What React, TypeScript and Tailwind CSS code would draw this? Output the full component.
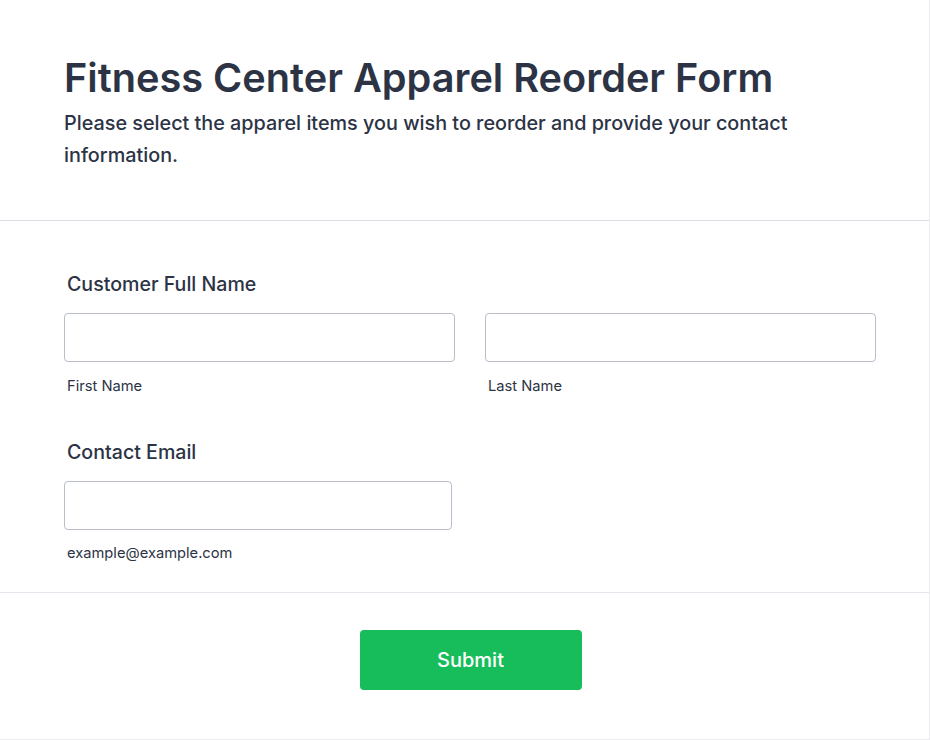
export default function App() {
  return (
    <div className="w-[930px] h-[740px] bg-white border-r border-b border-[#ececf0] font-['Inter',sans-serif] text-[#2c3345]">
      <header className="px-16 pt-[54px] pb-[49px] border-b border-[#dcdde4]">
        <h1 className="text-[39.7px] leading-[48px] font-semibold">
          Fitness Center Apparel Reorder Form
        </h1>
        <p className="mt-[5px] text-[19.8px] leading-8 font-medium max-w-[760px]">
          Please select the apparel items you wish to reorder and provide your contact information.
        </p>
      </header>

      <section className="px-16 pt-[51px] pb-[29px] border-b border-[#e6e7ee]">
        <label className="block px-[3px] text-[19.6px] leading-6 font-medium">Customer Full Name</label>
        <div className="mt-[17px] grid grid-cols-[391px_391px] gap-[30px]">
          <div>
            <input className="block w-full h-[49px] rounded border border-[#b8bdc9] bg-white" />
            <span className="block mt-[14px] px-[3px] text-[14.7px] leading-5">First Name</span>
          </div>
          <div>
            <input className="block w-full h-[49px] rounded border border-[#b8bdc9] bg-white" />
            <span className="block mt-[14px] px-[3px] text-[14.7px] leading-5">Last Name</span>
          </div>
        </div>

        <label className="block mt-[44px] px-[3px] text-[19.6px] leading-6 font-medium">Contact Email</label>
        <input className="block mt-[17px] w-[388px] h-[49px] rounded border border-[#b8bdc9] bg-white" />
        <span className="block mt-[13px] px-[3px] text-[14.7px] leading-5">example@example.com</span>
      </section>

      <footer className="flex justify-center pt-[37px] pl-3">
        <button className="w-[222px] h-[60px] rounded bg-[#18bd5b] text-white text-xl font-medium">
          Submit
        </button>
      </footer>
    </div>
  );
}
